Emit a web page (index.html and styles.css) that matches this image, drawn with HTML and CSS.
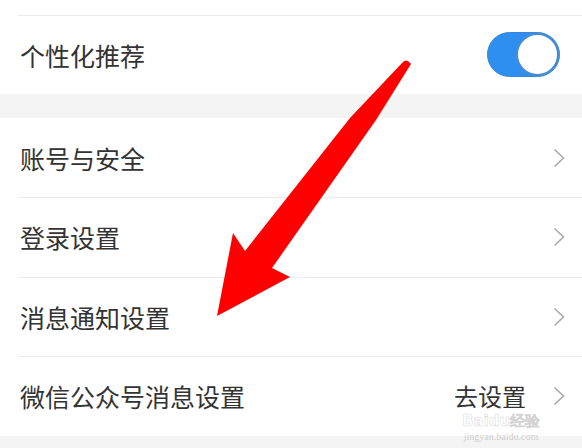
FILE: index.html
```html
<!DOCTYPE html>
<html lang="zh">
<head>
<meta charset="utf-8">
<link rel="stylesheet" href="styles.css">
</head>
<body>
<div class="page">
  <section class="group">
    <div class="row stub"></div>
    <div class="row divided">
      <span class="label">个性化推荐</span>
      <span class="toggle"><span class="knob"></span></span>
    </div>
  </section>
  <div class="gap"></div>
  <section class="group">
    <div class="row">
      <span class="label">账号与安全</span>
      <svg class="chev" viewBox="0 0 12 20"><path d="M1.5 1.5 L10.5 10 L1.5 18.5" fill="none" stroke="#a9a9a9" stroke-width="1.6"/></svg>
    </div>
    <div class="row divided tall">
      <span class="label">登录设置</span>
      <svg class="chev" viewBox="0 0 12 20"><path d="M1.5 1.5 L10.5 10 L1.5 18.5" fill="none" stroke="#a9a9a9" stroke-width="1.6"/></svg>
    </div>
    <div class="row divided">
      <span class="label">消息通知设置</span>
      <svg class="chev" viewBox="0 0 12 20"><path d="M1.5 1.5 L10.5 10 L1.5 18.5" fill="none" stroke="#a9a9a9" stroke-width="1.6"/></svg>
    </div>
    <div class="row divided tall">
      <span class="label">微信公众号消息设置</span>
      <span class="value">去设置</span>
      <svg class="chev" viewBox="0 0 12 20"><path d="M1.5 1.5 L10.5 10 L1.5 18.5" fill="none" stroke="#a9a9a9" stroke-width="1.6"/></svg>
    </div>
  </section>
  <div class="gap bottom"></div>

  <div class="watermark">
    <div class="wm-main">Baidu经验</div>
    <div class="wm-sub">jingyan.baidu.com</div>
  </div>

  <svg class="arrow" viewBox="0 0 582 448">
    <path d="M403 62 Q407 58 411 64 L376 120 L272 268 L290 277 L217 316 L233 233 L245 251 L350 118 Z" fill="#ff0000"/>
  </svg>
</div>
</body>
</html>
```
FILE: styles.css
```css
html, body {
  margin: 0;
  padding: 0;
  background: #ffffff;
}
.page {
  position: relative;
  width: 582px;
  height: 448px;
  overflow: hidden;
  font-family: "Noto Sans CJK SC", "Noto Sans", sans-serif;
  color: #333333;
}
.group {
  background: #ffffff;
}
.row {
  height: 79px;
  display: flex;
  align-items: center;
  padding: 0 17px 0 20px;
}
.row.tall {
  height: 80px;
}
.row.stub {
  height: 15px;
}
.row.divided {
  background-image: linear-gradient(#ececec, #ececec);
  background-size: calc(100% - 18px) 1px;
  background-position: right top;
  background-repeat: no-repeat;
}
.label {
  flex: 1;
  font-size: 25px;
  line-height: 30px;
}
.value {
  font-size: 24px;
  line-height: 24px;
  margin-right: 27px;
}
.chev {
  width: 12px;
  height: 20px;
  flex: none;
}
.toggle {
  width: 73px;
  height: 45px;
  border-radius: 23px;
  background: #2f8ff0;
  position: relative;
  margin-right: 5px;
  box-sizing: border-box;
  border: 1px solid #3a86d6;
}
.knob {
  position: absolute;
  right: 0;
  top: 0;
  width: 43px;
  height: 43px;
  border-radius: 50%;
  background: #ffffff;
  box-sizing: border-box;
  border: 2px solid #4a8cd0;
}
.gap {
  height: 24px;
  background: #f4f4f4;
}
.gap.bottom {
  height: 20px;
}
.watermark {
  position: absolute;
  left: 446px;
  top: 414px;
  width: 110px;
  text-align: center;
  font-family: "DejaVu Sans", sans-serif;
}
.wm-main {
  font-size: 15px;
  font-weight: bold;
  line-height: 15px;
  -webkit-text-stroke: 0.5px rgba(170, 170, 170, 0.5);
  color: rgba(255, 255, 255, 0.3);
}
.wm-sub {
  font-size: 10px;
  line-height: 11px;
  margin-top: 2px;
  font-family: "Liberation Serif", serif;
  color: rgba(170, 170, 170, 0.55);
}
.arrow {
  position: absolute;
  left: 0;
  top: 0;
  width: 582px;
  height: 448px;
  pointer-events: none;
}
```
